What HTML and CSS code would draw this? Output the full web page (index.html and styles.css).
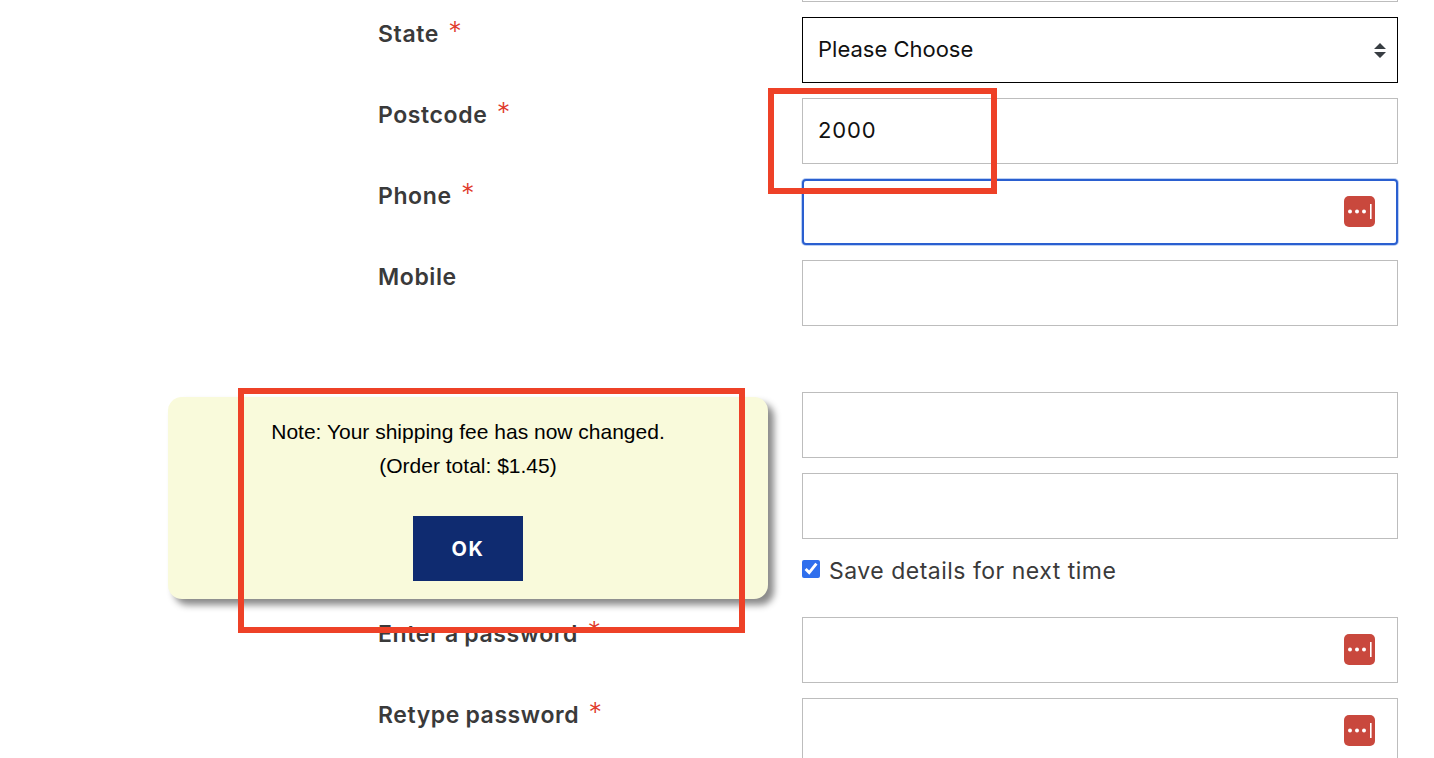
FILE: index.html
```html
<!DOCTYPE html>
<html lang="en">
<head>
<meta charset="UTF-8">
<meta name="viewport" content="width=device-width, initial-scale=1.0">
<title>Checkout details</title>
<link rel="stylesheet" href="styles.css">
</head>
<body>
<form class="details-form">
  <div class="form-row">
    <label class="field-label"></label>
    <input class="field" type="text">
  </div>
  <div class="form-row">
    <label class="field-label">State <span class="req">*</span></label>
    <select class="field field-select"><option>Please Choose</option></select>
  </div>
  <div class="form-row">
    <label class="field-label">Postcode <span class="req">*</span></label>
    <input class="field" type="text" value="2000">
  </div>
  <div class="form-row">
    <label class="field-label">Phone <span class="req">*</span></label>
    <div class="field field-focus">
      <svg class="pw-icon" viewBox="0 0 31 31"><rect width="31" height="31" rx="5" fill="#c9483d"/><circle cx="6" cy="15.5" r="2" fill="#fff"/><circle cx="13" cy="15.5" r="2" fill="#fff"/><circle cx="20" cy="15.5" r="2" fill="#fff"/><rect x="26" y="8" width="1.6" height="15" fill="#fff"/></svg>
    </div>
  </div>
  <div class="form-row form-row-spaced">
    <label class="field-label">Mobile</label>
    <input class="field" type="text">
  </div>
  <div class="form-row">
    <label class="field-label"></label>
    <input class="field" type="text">
  </div>
  <div class="form-row">
    <label class="field-label"></label>
    <input class="field" type="text">
  </div>
  <div class="form-row form-row-check">
    <span></span>
    <label class="save-label"><input class="save-check" type="checkbox" checked> Save details for next time</label>
  </div>
  <div class="form-row">
    <label class="field-label">Enter a password <span class="req">*</span></label>
    <div class="field">
      <svg class="pw-icon" viewBox="0 0 31 31"><rect width="31" height="31" rx="5" fill="#c9483d"/><circle cx="6" cy="15.5" r="2" fill="#fff"/><circle cx="13" cy="15.5" r="2" fill="#fff"/><circle cx="20" cy="15.5" r="2" fill="#fff"/><rect x="26" y="8" width="1.6" height="15" fill="#fff"/></svg>
    </div>
  </div>
  <div class="form-row">
    <label class="field-label">Retype password <span class="req">*</span></label>
    <div class="field">
      <svg class="pw-icon" viewBox="0 0 31 31"><rect width="31" height="31" rx="5" fill="#c9483d"/><circle cx="6" cy="15.5" r="2" fill="#fff"/><circle cx="13" cy="15.5" r="2" fill="#fff"/><circle cx="20" cy="15.5" r="2" fill="#fff"/><rect x="26" y="8" width="1.6" height="15" fill="#fff"/></svg>
    </div>
  </div>
</form>

<!-- shipping popup -->
<div class="popup">
  <p class="popup-text">Note: Your shipping fee has now changed.</p>
  <p class="popup-text">(Order total: $1.45)</p>
  <button class="popup-ok" type="button">OK</button>
</div>

<!-- red annotation boxes -->
<div class="mark mark-postcode"></div>
<div class="mark mark-popup"></div>
</body>
</html>
```

FILE: styles.css
```css
html, body {
  margin: 0;
  padding: 0;
  height: 758px;
  overflow: hidden;
  background: #fff;
}
body {
  position: relative;
  font-family: Inter, "Liberation Sans", sans-serif;
  color: #333;
}
.details-form {
  display: flex;
  flex-direction: column;
  gap: 15px;
  margin-top: -64px;
  padding-left: 378px;
  width: 1020px;
}
.form-row {
  display: grid;
  grid-template-columns: 424px 596px;
}
.form-row-spaced {
  margin-bottom: 51px;
}
.form-row-check {
  margin-top: -1px;
  height: 49px;
  align-items: start;
}
.field-label {
  padding-top: 3px;
  font-size: 23px;
  font-weight: 600;
  line-height: 28px;
  letter-spacing: 0.6px;
  word-spacing: -1px;
  color: #3a3a3a;
}
.req {
  color: #e03a2c;
  margin-left: 4px;
  font-size: 27px;
  font-weight: 300;
  line-height: 0;
  vertical-align: 1px;
}
.field {
  box-sizing: border-box;
  display: flex;
  align-items: center;
  justify-content: flex-end;
  width: 596px;
  height: 66px;
  margin: 0;
  padding: 0 22px 2px 15px;
  border: 1px solid #bdbdbd;
  border-radius: 0;
  background: #fff;
  font-family: Inter, "Liberation Sans", sans-serif;
  font-size: 22px;
  letter-spacing: 0.9px;
  color: #111;
  outline: none;
}
.field-select {
  appearance: none;
  letter-spacing: 0;
  border-color: #000;
  background-image: url("data:image/svg+xml,%3Csvg xmlns='http://www.w3.org/2000/svg' width='12' height='15'%3E%3Cpath d='M6 0l6 6H0zM6 15L0 9h12z' fill='%23383d42'/%3E%3C/svg%3E");
  background-repeat: no-repeat;
  background-position: right 11px center;
}
.field-focus {
  border: 2px solid #2a5fd0;
  border-radius: 4px;
  box-shadow: 0 0 0 1px #bcd0f3;
  padding-right: 21px;
}
.pw-icon {
  width: 31px;
  height: 31px;
  display: block;
}
.save-label {
  display: flex;
  align-items: center;
  gap: 9px;
  font-size: 23px;
  line-height: 36px;
  letter-spacing: 0.5px;
  color: #3a3a3a;
}
.save-check {
  width: 18px;
  height: 18px;
  margin: 0 0 5px;
  accent-color: #2f6fed;
}
.popup {
  position: absolute;
  left: 168px;
  top: 397px;
  box-sizing: border-box;
  width: 600px;
  height: 202px;
  padding: 23px 0 0 0;
  background: #f9fadb;
  border-radius: 14px;
  box-shadow: 6px 6px 7px #8a8a8a;
  text-align: center;
  font-family: "Liberation Sans", Arial, sans-serif;
  color: #000;
}
.popup-text {
  margin: 0 0 11px;
  font-size: 21px;
  line-height: 23px;
}
.popup-ok {
  display: block;
  width: 110px;
  height: 65px;
  margin: 39px auto 0;
  border: none;
  background: #0f2b70;
  color: #fff;
  font-family: Inter, "Liberation Sans", sans-serif;
  font-size: 20px;
  font-weight: 700;
  letter-spacing: 1.6px;
}
.mark {
  position: absolute;
  box-sizing: border-box;
  border: 6px solid #ee4127;
}
.mark-postcode {
  left: 768px;
  top: 88px;
  width: 229px;
  height: 106px;
}
.mark-popup {
  left: 238px;
  top: 388px;
  width: 507px;
  height: 245px;
}
```
